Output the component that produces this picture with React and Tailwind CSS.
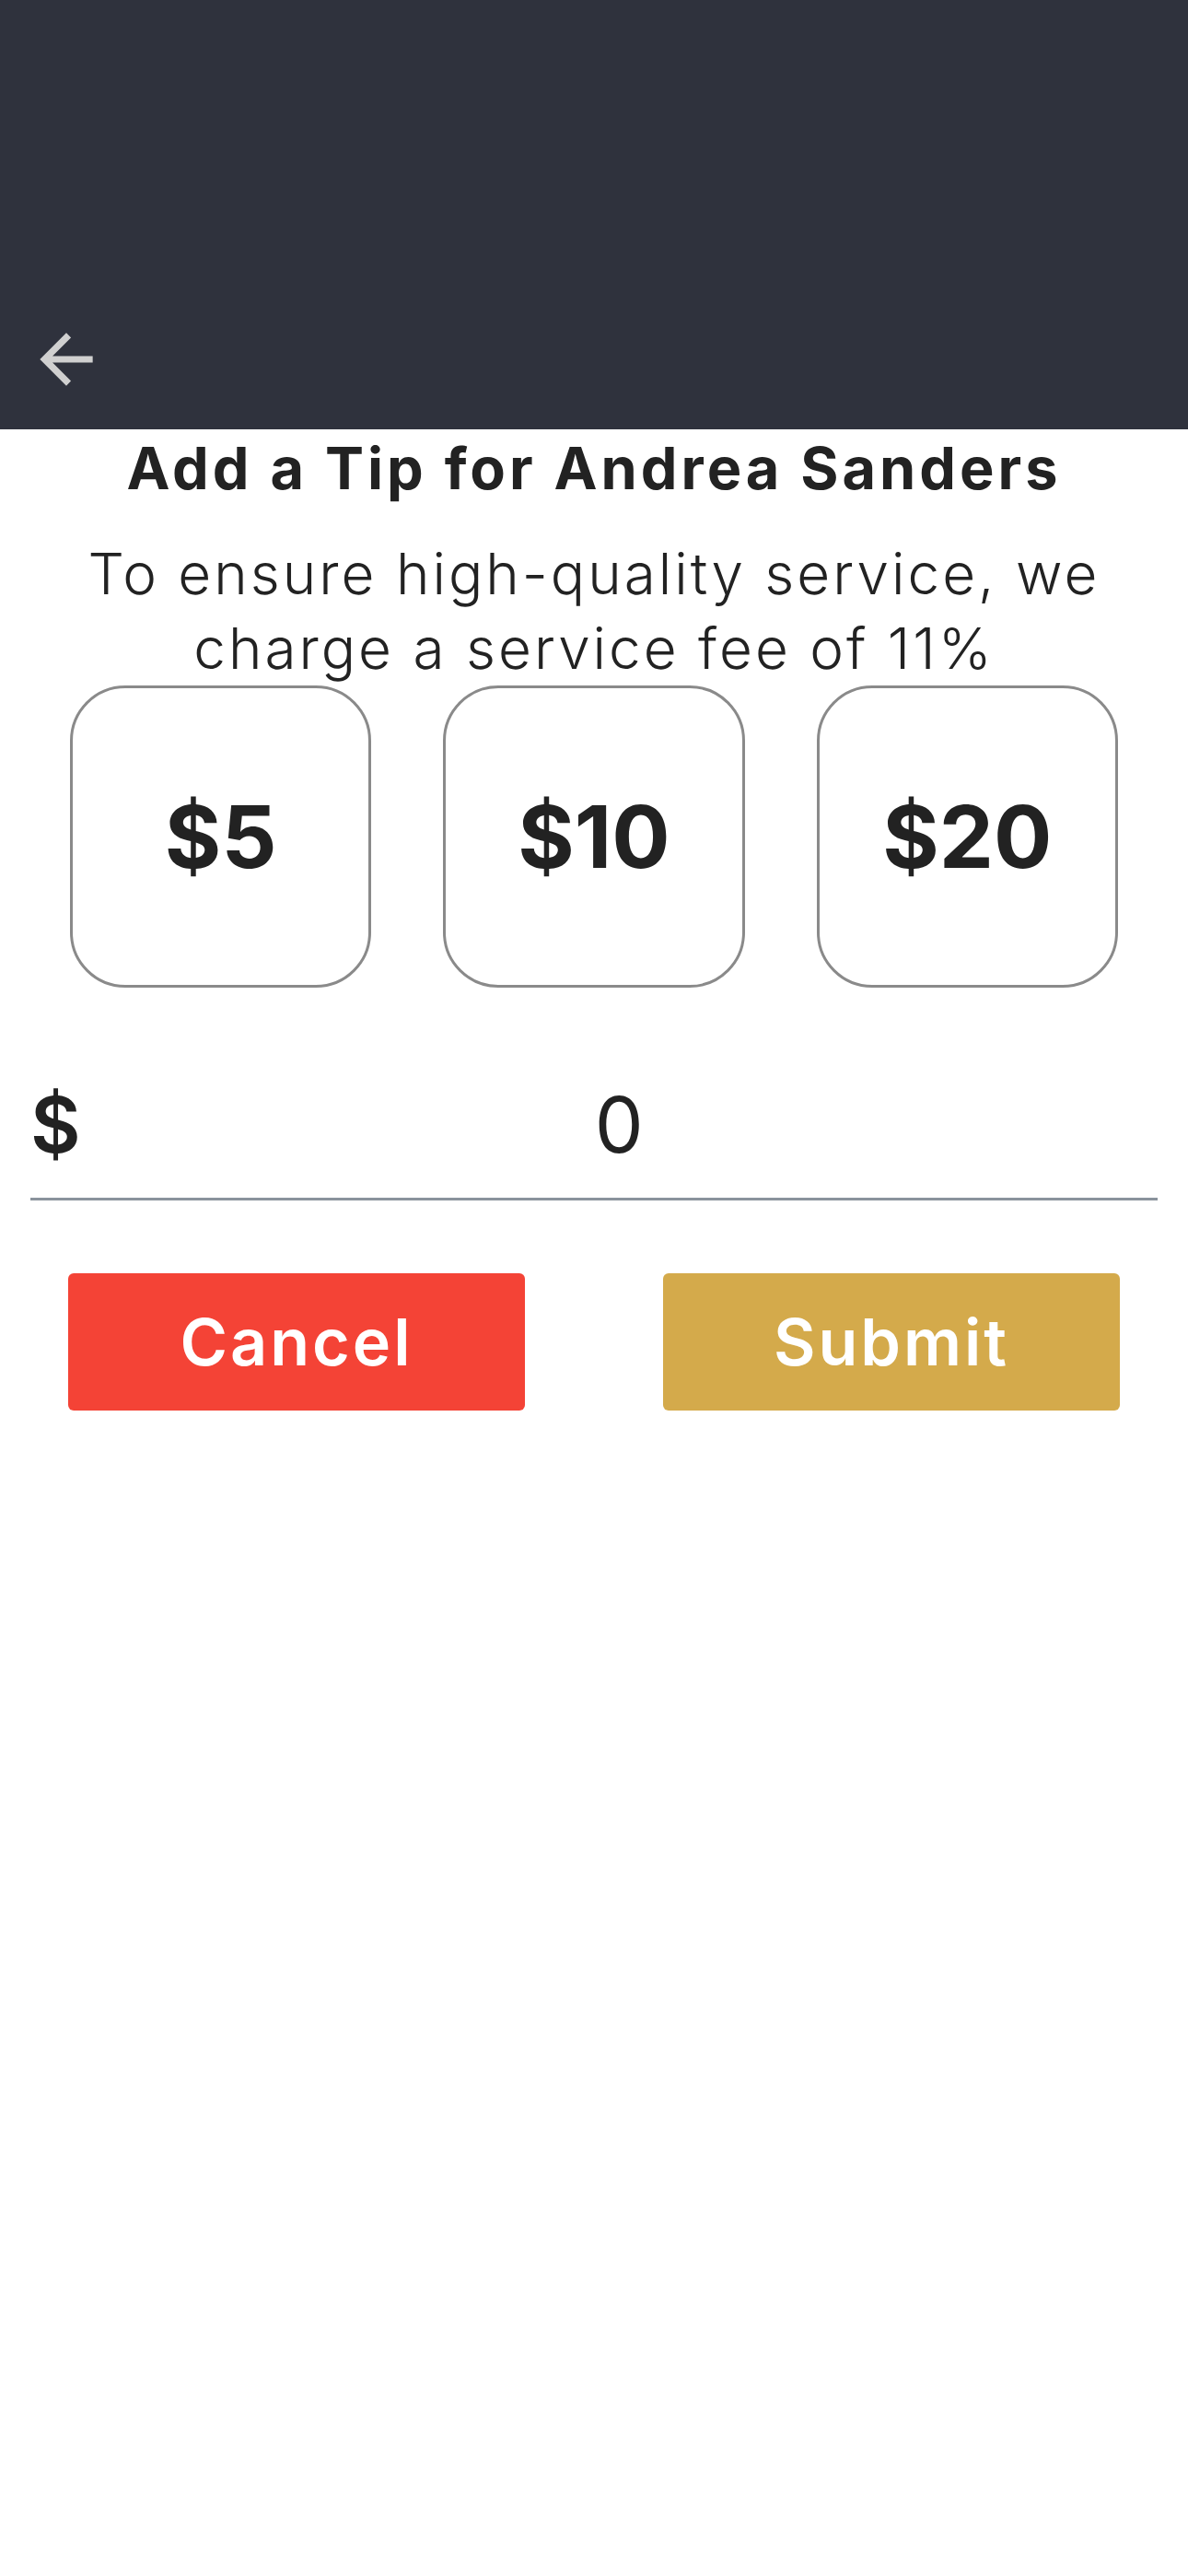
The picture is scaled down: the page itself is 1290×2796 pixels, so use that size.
import { useState } from "react";

const amounts = [5, 10, 20];

export default function App() {
  const [tip, setTip] = useState("0");

  return (
    <div className="min-h-screen bg-white text-[#222222]" style={{ fontFamily: "Inter, 'Open Sans', sans-serif" }}>
      {/* Header */}
      <div className="h-[466px] bg-[#2f323d] flex items-end pl-[29px] pb-[33px]">
        <svg width="86" height="86" viewBox="0 0 24 24" fill="#d0d0d0">
          <path d="M20 11H7.83l5.59-5.59L12 4l-8 8 8 8 1.41-1.41L7.83 13H20v-2z" />
        </svg>
      </div>

      <h1 className="mt-[4px] text-center text-[63px] leading-[76px] font-bold tracking-[4px]">
        Add a Tip for Andrea Sanders
      </h1>
      <p className="mt-[36px] text-center text-[62px] leading-[81px] font-light tracking-[3px] px-[40px]">
        To ensure high-quality service, we charge a service fee of 11%
      </p>

      {/* Preset amounts */}
      <div className="grid grid-cols-3 gap-[78px] px-[76px]">
        {amounts.map((a) => (
          <button
            key={a}
            onClick={() => setTip(String(a))}
            className="h-[328px] rounded-[60px] border-[3px] border-[#8a8a8a] flex items-center justify-center text-[94px] font-bold"
          >
            ${a}
          </button>
        ))}
      </div>

      {/* Custom amount */}
      <div className="mt-[99px] mx-[33px] flex items-center pb-[29px] border-b-[3px] border-[#8a939c]">
        <span className="text-[84px] leading-[100px] font-semibold">$</span>
        <input
          value={tip}
          onChange={(e) => setTip(e.target.value)}
          className="flex-1 min-w-0 text-center text-[84px] leading-[100px] font-normal outline-none bg-transparent"
        />
      </div>

      {/* Actions */}
      <div className="mt-[79px] flex justify-between px-[74px]">
        <button className="w-[496px] h-[149px] rounded-[6px] bg-[#f44336] text-white text-[70px] font-semibold tracking-[3px]">
          Cancel
        </button>
        <button className="w-[496px] h-[149px] rounded-[6px] bg-[#d4aa4b] text-white text-[70px] font-semibold tracking-[3px]">
          Submit
        </button>
      </div>
    </div>
  );
}
